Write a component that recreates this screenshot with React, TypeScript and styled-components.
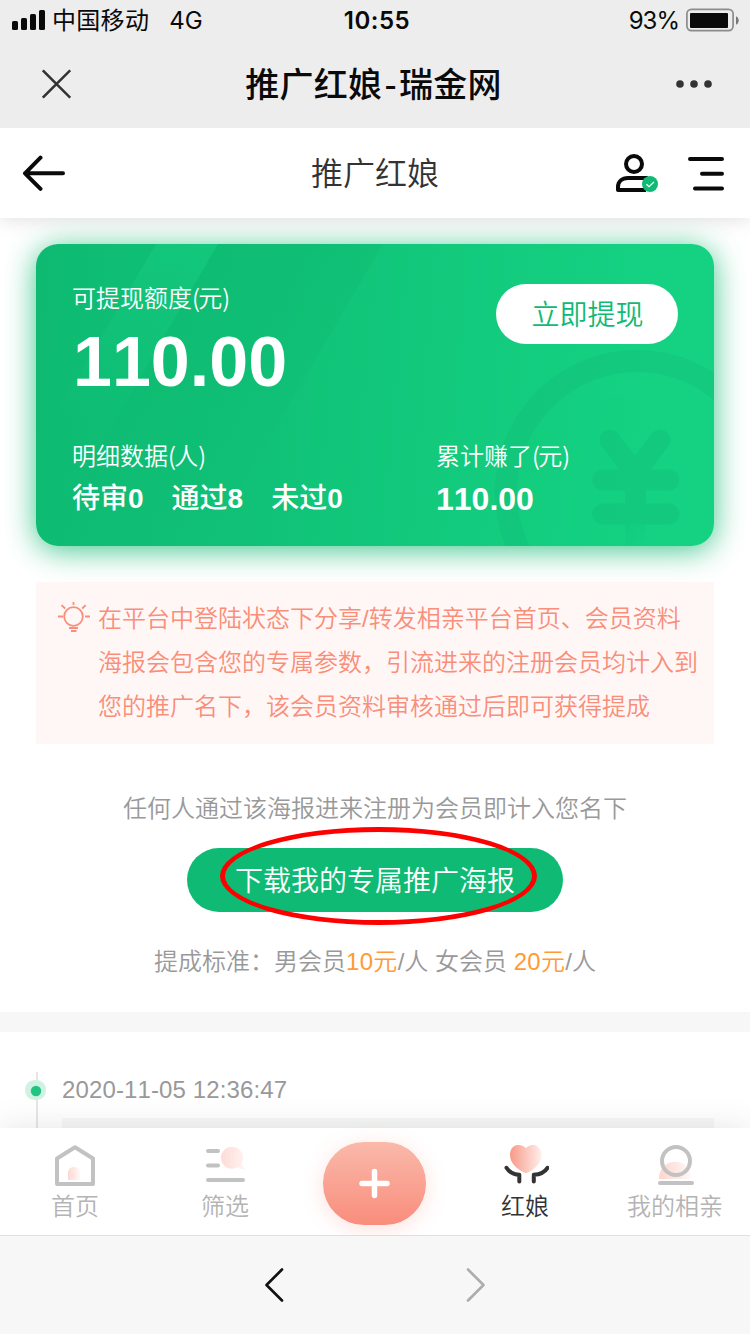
import React from 'react';
import styled, { createGlobalStyle } from 'styled-components';

const GlobalStyle = createGlobalStyle`
  * { box-sizing: border-box; }
  body {
    margin: 0;
    background: #fff;
    font-family: "Liberation Sans", "Noto Sans CJK SC", sans-serif;
    font-weight: 350;
    font-kerning: none;
  }
  svg { display: block; flex: none; }
`;

const Screen = styled.div`
  width: 750px;
  height: 1334px;
  display: flex;
  flex-direction: column;
  overflow: hidden;
  background: #fff;
`;

const StatusBar = styled.div`
  height: 40px;
  flex: none;
  display: grid;
  grid-template-columns: 1fr auto 1fr;
  align-items: center;
  padding: 0 11px 0 12px;
  background: #ededed;
  color: #0a0a0a;
  font: 400 24px/38px Inter, "Noto Sans CJK SC", sans-serif;
`;

const StatusGroup = styled.div<{ $end?: boolean }>`
  display: flex;
  align-items: center;
  gap: 7px;
  justify-content: ${(p) => (p.$end ? 'flex-end' : 'flex-start')};
`;

const StatusText = styled.span<{ $gap?: number; $spacing?: number }>`
  padding-top: 2px;
  margin-left: ${(p) => p.$gap ?? 0}px;
  letter-spacing: ${(p) => p.$spacing ?? 0}px;
`;

const Clock = styled.span`
  padding: 2px 0 0 3px;
  font-weight: 600;
  letter-spacing: 0.5px;
`;

const BrowserBar = styled.div`
  height: 88px;
  flex: none;
  display: flex;
  align-items: center;
  justify-content: space-between;
  padding: 0 36px 0 41px;
  background: #ededed;
`;

const BrowserTitle = styled.h1`
  margin: 0;
  padding-bottom: 2px;
  color: #0a0a0a;
  font: 500 34px/86px "Noto Sans CJK SC", sans-serif;
  letter-spacing: 0.3px;

  span { margin: 0 2px; }
`;

const PageHeader = styled.header`
  position: relative;
  z-index: 2;
  height: 90px;
  flex: none;
  display: grid;
  grid-template-columns: 1fr auto 1fr;
  align-items: center;
  padding: 0 26px 0 22px;
  background: #fff;
  box-shadow: 0 0 20px rgba(0, 0, 0, 0.15);
  clip-path: inset(0 0 -30px 0);
`;

const PageTitle = styled.h2`
  margin: 0;
  padding: 2px 0 0 4px;
  color: #333;
  font-size: 32px;
  line-height: 88px;
  font-weight: 350;
`;

const HeaderActions = styled.div`
  display: flex;
  align-items: center;
  justify-content: flex-end;
  gap: 30px;
`;

const Content = styled.main`
  flex: 1;
  min-height: 0;
  overflow: hidden;
  display: flex;
  flex-direction: column;
`;

const Summary = styled.section`
  flex: none;
  height: 794px;
  padding: 26px 36px 0;
`;

const BalanceCard = styled.div`
  position: relative;
  height: 302px;
  padding: 35px 36px 36px;
  border-radius: 22px;
  color: #fff;
  background: linear-gradient(95deg, #0eba72 0%, #10c277 35%, #12c97c 58%, #15d283 90%);
  box-shadow: 0 4px 30px rgba(15, 185, 115, 0.8);
`;

const CardArt = styled.svg`
  position: absolute;
  inset: 0;
  border-radius: 22px;
`;

const CardRow = styled.div`
  position: relative;
  display: flex;
  align-items: flex-start;
  justify-content: space-between;
`;

const Label = styled.div`
  font-family: "Noto Sans CJK SC", sans-serif;
  font-size: 24px;
  line-height: 35px;

  span { letter-spacing: -1.8px; }
`;

const Balance = styled.div`
  margin: 3px 0 0 1px;
  height: 120px;
  font-size: 70px;
  line-height: 90px;
  font-weight: 700;
`;

const WithdrawButton = styled.button`
  width: 182px;
  height: 60px;
  margin-top: 5px;
  padding: 3px 0 0 1px;
  border: 0;
  border-radius: 30px;
  background: #fff;
  color: #0fba74;
  font: inherit;
  font-size: 28px;
  line-height: 57px;
`;

const StatColumn = styled.div<{ $width?: number }>`
  ${(p) => (p.$width ? `width: ${p.$width}px;` : '')}
`;

const StatValues = styled.div<{ $size?: number }>`
  display: flex;
  gap: 28px;
  margin-top: 6px;
  font-size: ${(p) => p.$size ?? 28}px;
  line-height: 42px;
  font-weight: 500;

  b { font-weight: 700; }
`;

const Notice = styled.div`
  display: flex;
  gap: 8px;
  height: 162px;
  margin-top: 36px;
  padding: 15px 0 0 22px;
  background: #fff7f6;
  color: #f98e7a;
  font-size: 24px;
  line-height: 44px;
`;

const NoticeIcon = styled.div`
  padding-top: 5px;
`;

const NoticeLine = styled.div`
  white-space: nowrap;
`;

const Hint = styled.p<{ $top: number }>`
  margin: ${(p) => p.$top}px 0 0;
  color: #999;
  font-size: 24px;
  line-height: 36px;
  text-align: center;

  em { font-style: normal; color: #ff9a35; letter-spacing: 0.3px; }
`;

const DownloadButton = styled.button`
  position: relative;
  display: block;
  width: 376px;
  height: 64px;
  margin: 21px auto 0;
  padding: 3px 0 0;
  border: 0;
  border-radius: 32px;
  background: #0fbb74;
  color: #fff;
  font: inherit;
  font-size: 28px;
  line-height: 61px;
`;

const Highlight = styled.span`
  position: absolute;
  left: 33px;
  top: -21px;
  width: 317px;
  height: 98px;
  border: 5px solid #fe0000;
  border-radius: 50%;
`;

const Divider = styled.div`
  flex: none;
  height: 20px;
  background: #f7f7f7;
`;

const Timeline = styled.section`
  flex: none;
  display: flex;
  gap: 15px;
  padding: 40px 36px 0 25px;
`;

const TimelineEntry = styled.div`
  flex: 1;
`;

const TimelineDate = styled.div`
  height: 46px;
  color: #999;
  font-size: 24px;
  line-height: 36px;
  letter-spacing: 0.13px;
`;

const TimelineCard = styled.div`
  height: 80px;
  background: #f7f7f7;
`;

const TabBar = styled.nav`
  position: relative;
  z-index: 2;
  flex: none;
  height: 108px;
  display: grid;
  grid-template-columns: repeat(5, 1fr);
  background: #fff;
  border-bottom: 1px solid #e0e0e0;
  box-shadow: 0 0 30px rgba(40, 60, 50, 0.13);
  clip-path: inset(-40px 0 0 0);
`;

const Tab = styled.div<{ $active?: boolean }>`
  display: flex;
  flex-direction: column;
  align-items: center;
  padding-top: 15px;
  color: ${(p) => (p.$active ? '#333' : '#b4b4b4')};
  font-size: 24px;
  line-height: 37px;
`;

const AddButton = styled.div`
  display: flex;
  align-items: center;
  justify-content: center;
  width: 103px;
  height: 83px;
  margin: 14px 0 0 23px;
  border-radius: 41px;
  background: linear-gradient(180deg, #fab9aa, #f98d7c);
  box-shadow: 0 4px 20px rgba(249, 141, 124, 0.25);
`;

const BottomBar = styled.footer`
  flex: none;
  height: 98px;
  display: flex;
  align-items: center;
  justify-content: center;
  gap: 180px;
  background: #f7f7f7;
`;

const Signal = () => (
  <svg width="33" height="20" fill="#0a0a0a">
    <rect x="0" y="11" width="6" height="9" rx="1.5" />
    <rect x="9" y="8" width="6" height="12" rx="1.5" />
    <rect x="18" y="4" width="6" height="16" rx="1.5" />
    <rect x="27" y="0" width="6" height="20" rx="1.5" />
  </svg>
);

const Battery = () => (
  <svg width="53" height="24">
    <rect x="0.9" y="1.4" width="46.2" height="21.2" rx="4.5" fill="none" stroke="#8c8c8c" strokeWidth="1.7" />
    <rect x="4" y="5" width="38" height="15" rx="1" fill="#0a0a0a" />
    <path d="M50 8.300c3.600 1.400 3.600 7 0 8.400z" fill="#777" />
  </svg>
);

const CloseIcon = () => (
  <svg width="30" height="30" stroke="#333" strokeWidth="2.6" fill="none">
    <path d="M1.8 1.3 29.2 28.7M29.2 1.3 1.8 28.7" />
  </svg>
);

const MoreIcon = () => (
  <svg width="38" height="8" fill="#333">
    <circle cx="4" cy="4" r="3.8" />
    <circle cx="18" cy="4" r="3.8" />
    <circle cx="32" cy="4" r="3.8" />
  </svg>
);

const BackIcon = () => (
  <svg width="44" height="36" stroke="#0a0a0a" strokeWidth="4" fill="none" strokeLinecap="round" strokeLinejoin="round">
    <path d="M18.5 2.7 3 18.3 18.5 33.8M3 18.3H41" />
  </svg>
);

const MemberIcon = () => (
  <svg width="44" height="40" fill="none">
    <circle cx="20" cy="11" r="8" stroke="#0a0a0a" strokeWidth="4" />
    <path d="M34 25H14C8 25 4 28.500 4 34V37H32" stroke="#0a0a0a" strokeWidth="4" strokeLinejoin="round" />
    <circle cx="36" cy="31" r="8" fill="#0fbb74" />
    <path d="M32.400 31.200 35 33.700 40 29" stroke="#fff" strokeWidth="1.200" />
  </svg>
);

const MenuIcon = () => (
  <svg width="36" height="36" fill="none" stroke="#0a0a0a" strokeWidth="4" strokeLinecap="round">
    <path d="M2 4H34M14 18.700H34M7 33.500H34" />
  </svg>
);

const BulbIcon = () => (
  <svg width="32" height="32" viewBox="0 0 32 32" fill="none" stroke="#f98e7a" strokeWidth="1.8">
    <circle cx="15.500" cy="14.500" r="9.300" />
    <path d="M15.500 0V3M0 14.500H5M27 14.500H32M3.500 3.200 7.200 6.500M27.700 3.200 24.200 6.500M11 26H20M13 29H18.500" />
  </svg>
);

const CardDecoration = () => (
  <CardArt width="678" height="302" viewBox="0 0 678 302">
    <defs>
      <linearGradient id="fadeDown" x1="0" y1="0" x2="0" y2="1">
        <stop offset="0" stopColor="#14cb7f" stopOpacity="0.6" />
        <stop offset="1" stopColor="#14cb7f" stopOpacity="0" />
      </linearGradient>
      <linearGradient id="shade" x1="0" y1="0" x2="0" y2="1">
        <stop offset="0" stopColor="#0bad69" stopOpacity="0.22" />
        <stop offset="1" stopColor="#0bad69" stopOpacity="0" />
      </linearGradient>
      <linearGradient id="stem" gradientUnits="userSpaceOnUse" x1="588" y1="275" x2="610" y2="300">
        <stop offset="0" stopColor="#0fb573" />
        <stop offset="1" stopColor="#0fb573" stopOpacity="0.1" />
      </linearGradient>
    </defs>
    <path d="M120 0H182L80 175H17Z" fill="url(#fadeDown)" />
    <path d="M182 0H347L171 302H6Z" fill="url(#shade)" />
    <circle cx="601" cy="248" r="131" fill="none" stroke="#0fb573" strokeOpacity="0.25" strokeWidth="22" />
    <g opacity="0.28" fill="none" stroke="#0fb573" strokeWidth="21" strokeLinecap="round">
      <path d="M574 196 599 229 624 196M566.500 236H633M566.500 270H633" />
      <path d="M599.500 228V280" strokeLinecap="butt" />
      <path d="M589 280H610V302H589Z" fill="url(#stem)" stroke="none" />
    </g>
  </CardArt>
);

const HomeIcon = () => (
  <svg width="44" height="45" fill="none">
    <defs>
      <linearGradient id="door"><stop stopColor="#fdd8d1" /><stop offset="1" stopColor="#fff8f6" /></linearGradient>
    </defs>
    <path d="M15 37V30C15 26 18 24 21 24S27 26 27 30V37Z" fill="url(#door)" />
    <path d="M4 15.500 22 4.300 40 15.500V41H4Z" stroke="#c2c2c2" strokeWidth="4" strokeLinejoin="round" />
  </svg>
);

const FilterIcon = () => (
  <svg width="44" height="45" fill="none">
    <defs>
      <linearGradient id="lens"><stop stopColor="#fddcd6" /><stop offset="1" stopColor="#fff1ee" /></linearGradient>
    </defs>
    <path d="M37 20 42 26.500 38 26 33 23Z" fill="#fff1ee" />
    <circle cx="29" cy="14.700" r="11" fill="url(#lens)" />
    <path d="M5 8H15M5 22.500H15M5 37H40" stroke="#c2c2c2" strokeWidth="4" strokeLinecap="round" />
  </svg>
);

const MatchmakerIcon = () => (
  <svg width="48" height="45" viewBox="-2 0 48 45" fill="none">
    <defs>
      <linearGradient id="heart"><stop stopColor="#f89a88" /><stop offset="1" stopColor="#ffeeeb" /></linearGradient>
    </defs>
    <path d="M23 5C20 2 16 1.500 13 2.300 9.500 3.300 7 7 7 12 7 20 14 26.500 23 30.200 32 26.500 38.500 20 38.500 12 38.500 7 35.500 3.300 32 2.300 29 1.500 26 2 23 5Z" fill="url(#heart)" />
    <path d="M3.500 24.800C6 29 9 31.300 16.300 31.800V38.500M44.500 24.800C42 29 38.500 31.300 30.800 31.800V38.500" stroke="#333" strokeWidth="4" strokeLinecap="round" strokeLinejoin="round" />
  </svg>
);

const MineIcon = () => (
  <svg width="44" height="45" fill="none">
    <defs>
      <linearGradient id="dome"><stop stopColor="#fdd5cd" /><stop offset="1" stopColor="#fff8f6" /></linearGradient>
    </defs>
    <path d="M6 36C6 13 38 13 38 36Z" fill="url(#dome)" />
    <circle cx="23" cy="18" r="14" stroke="#c2c2c2" strokeWidth="4" />
    <path d="M7 40H39" stroke="#c2c2c2" strokeWidth="4" strokeLinecap="round" />
  </svg>
);

const PlusIcon = () => (
  <svg width="32" height="32" stroke="#fff" strokeWidth="5.500" strokeLinecap="round">
    <path d="M15.500 3.500V27.500M3 15.500H28" />
  </svg>
);

const Chevron = ({ forward }: { forward?: boolean }) => (
  <svg width="22" height="36" fill="none" stroke={forward ? '#adadad' : '#111'} strokeWidth="2.600" strokeLinecap="round" strokeLinejoin="round">
    <path d={forward ? 'M3 2.500 18.500 18 3 33.500' : 'M19 2.500 3.500 18 19 33.500'} />
  </svg>
);

const TimelineMark = () => (
  <svg width="22" height="80">
    <path d="M12 0V80" stroke="#e6e6e6" strokeWidth="2" />
    <rect x="0" y="8" width="21" height="20" rx="9.500" fill="#d0f2e3" />
    <circle cx="11" cy="19" r="5.200" fill="#22c482" />
  </svg>
);

export default function App() {
  return (
    <>
      <GlobalStyle />
      <Screen>
        <StatusBar>
          <StatusGroup>
            <Signal />
            <StatusText $spacing={0.3}>中国移动</StatusText>
            <StatusText $gap={13}>4G</StatusText>
          </StatusGroup>
          <Clock>10:55</Clock>
          <StatusGroup $end>
            <StatusText $spacing={-1}>93%</StatusText>
            <Battery />
          </StatusGroup>
        </StatusBar>
        <BrowserBar>
          <CloseIcon />
          <BrowserTitle>推广红娘<span>-</span>瑞金网</BrowserTitle>
          <MoreIcon />
        </BrowserBar>
        <PageHeader>
          <BackIcon />
          <PageTitle>推广红娘</PageTitle>
          <HeaderActions>
            <MemberIcon />
            <MenuIcon />
          </HeaderActions>
        </PageHeader>

        <Content>
          <Summary>
            <BalanceCard>
              <CardDecoration />
              <CardRow>
                <div>
                  <Label>可提现额度<span>(</span>元<span>)</span></Label>
                  <Balance>110.00</Balance>
                </div>
                <WithdrawButton>立即提现</WithdrawButton>
              </CardRow>
              <CardRow>
                <StatColumn>
                  <Label>明细数据<span>(</span>人<span>)</span></Label>
                  <StatValues>
                    <span>待审<b>0</b></span>
                    <span>通过<b>8</b></span>
                    <span>未过<b>0</b></span>
                  </StatValues>
                </StatColumn>
                <StatColumn $width={242}>
                  <Label>累计赚了<span>(</span>元<span>)</span></Label>
                  <StatValues $size={32}><b>110.00</b></StatValues>
                </StatColumn>
              </CardRow>
            </BalanceCard>
            <Notice>
              <NoticeIcon>
                <BulbIcon />
              </NoticeIcon>
              <div>
                <NoticeLine>在平台中登陆状态下分享/转发相亲平台首页、会员资料</NoticeLine>
                <NoticeLine>海报会包含您的专属参数，引流进来的注册会员均计入到</NoticeLine>
                <NoticeLine>您的推广名下，该会员资料审核通过后即可获得提成</NoticeLine>
              </div>
            </Notice>
            <Hint $top={47}>任何人通过该海报进来注册为会员即计入您名下</Hint>
            <DownloadButton>
              下载我的专属推广海报
              <Highlight />
            </DownloadButton>
            <Hint $top={32}>
              提成标准：男会员<em>10元</em>/人 女会员 <em>20元</em>/人
            </Hint>
          </Summary>
          <Divider />
          <Timeline>
            <TimelineMark />
            <TimelineEntry>
              <TimelineDate>2020-11-05 12:36:47</TimelineDate>
              <TimelineCard />
            </TimelineEntry>
          </Timeline>
        </Content>

        <TabBar>
          <Tab><HomeIcon />首页</Tab>
          <Tab><FilterIcon />筛选</Tab>
          <AddButton><PlusIcon /></AddButton>
          <Tab $active><MatchmakerIcon />红娘</Tab>
          <Tab><MineIcon />我的相亲</Tab>
        </TabBar>
        <BottomBar>
          <Chevron />
          <Chevron forward />
        </BottomBar>
      </Screen>
    </>
  );
}
